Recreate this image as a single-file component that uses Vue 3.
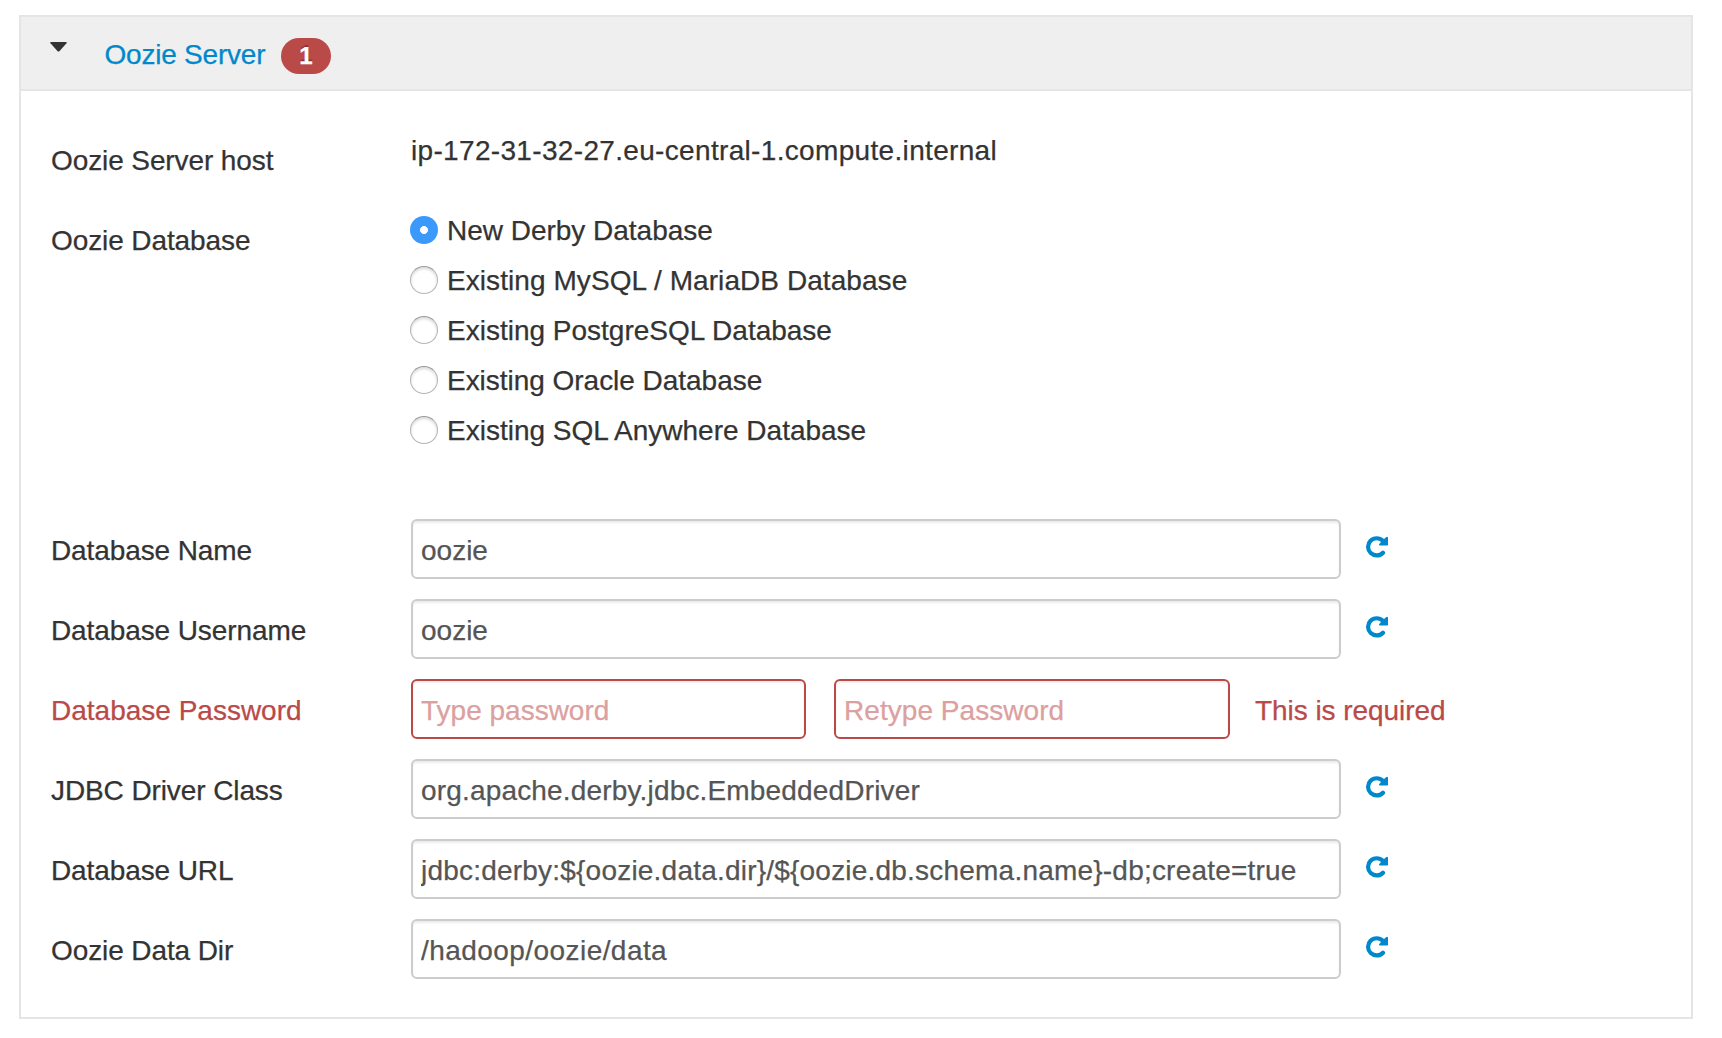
<script setup>
import { ref } from 'vue'

const database = ref('derby')
const databases = [
  { id: 'derby', text: 'New Derby Database', ls: -0.02 },
  { id: 'mysql', text: 'Existing MySQL / MariaDB Database', ls: 0.07 },
  { id: 'postgres', text: 'Existing PostgreSQL Database', ls: 0 },
  { id: 'oracle', text: 'Existing Oracle Database', ls: -0.03 },
  { id: 'sqlanywhere', text: 'Existing SQL Anywhere Database', ls: 0 },
]
const fields = ref([
  { label: 'Database Name', value: 'oozie', ls: 0 },
  { label: 'Database Username', value: 'oozie', ls: 0 },
  { label: 'Database Password', password: true },
  { label: 'JDBC Driver Class', value: 'org.apache.derby.jdbc.EmbeddedDriver', ls: 0.17 },
  { label: 'Database URL', value: 'jdbc:derby:${oozie.data.dir}/${oozie.db.schema.name}-db;create=true', ls: 0.21 },
  { label: 'Oozie Data Dir', value: '/hadoop/oozie/data', ls: 0.44 },
])
</script>

<template>
  <section class="panel">
    <header class="heading">
      <svg class="caret" width="17" height="10" viewBox="0 0 17 10"><path d="M1 0H16Q17.2 .3 16.5 1.2L9.4 9.2Q8.500 10 7.600 9.2L.5 1.2Q-.2 .3 1 0Z" /></svg>
      <a class="title">Oozie Server</a>
      <span class="badge">1</span>
    </header>

    <div class="body">
      <div class="row host">
        <div class="label">Oozie Server host</div>
        <div class="value">ip-172-31-32-27.eu-central-1.compute.internal</div>
      </div>

      <div class="row database">
        <div class="label">Oozie Database</div>
        <div class="options">
          <label v-for="d in databases" :key="d.id" class="option">
            <input v-model="database" type="radio" class="radio" :value="d.id" />
            <span :style="{ letterSpacing: d.ls + 'px' }">{{ d.text }}</span>
          </label>
        </div>
      </div>

      <div v-for="f in fields" :key="f.label" class="row field" :class="{ error: f.password }">
        <div class="label">{{ f.label }}</div>
        <template v-if="f.password">
          <input class="text half" placeholder="Type password" />
          <input class="text half second" placeholder="Retype Password" />
          <span class="message">This is required</span>
        </template>
        <template v-else>
          <input v-model="f.value" class="text" :style="{ letterSpacing: f.ls + 'px' }" />
          <svg class="undo" width="22" height="22" viewBox="0 0 22 22">
            <path d="M17 16.700A8.600 8.600 0 1 1 16.800 4.800" fill="none" stroke="#08c" stroke-width="4.200" stroke-linecap="round" />
            <path d="M22 1.600V8.800Q22 9.600 21.200 9.600H13.800Q12.500 9.200 13.300 8L15 6L17.500 3.500L20.400 1Q21.800 .4 22 1.600Z" fill="#08c" />
          </svg>
        </template>
      </div>
    </div>
  </section>
</template>

<style>
body {
  background: #fff;
}
</style>

<style scoped>
.panel {
  box-sizing: border-box;
  width: 1674px;
  height: 1004px;
  margin: 15px 0 0 19px;
  border: 2px solid #e5e5e5;
  color: #333;
  font: 28px/40px "Liberation Sans", Arial, sans-serif;
  -webkit-text-stroke: 0.25px currentColor;
}
.heading {
  display: flex;
  align-items: flex-start;
  height: 72px;
  background: #efefef;
  border-bottom: 2px solid #e5e5e5;
}
.caret {
  margin: 25px 0 0 29px;
  fill: #333;
}
.title {
  width: 176.500px;
  margin: 18px 0 0 37.500px;
  color: #08c;
  letter-spacing: -0.22px;
}
.badge {
  width: 50px;
  height: 36px;
  margin-top: 21px;
  border-radius: 18px;
  background: #b94a48;
  color: #fff;
  font-size: 24px;
  font-weight: bold;
  line-height: 35px;
  text-align: center;
  text-shadow: 0 -2px 0 rgba(0, 0, 0, 0.25);
}
.body {
  padding: 39px 0 0 30px;
}
.row {
  display: flex;
  align-items: flex-start;
  height: 80px;
}
.row.database {
  height: 309px;
}
.label {
  flex: none;
  width: 360px;
  padding-top: 11px;
  letter-spacing: -0.1px;
}
.value {
  padding-top: 1px;
  letter-spacing: 0.33px;
}
.options {
  display: flex;
  flex-direction: column;
  gap: 10px;
  margin-left: -1px;
}
.option {
  display: flex;
  height: 40px;
}
.option span {
  padding-top: 1px;
}
.radio {
  appearance: none;
  box-sizing: border-box;
  width: 28px;
  height: 28px;
  margin: 6px 9px 0 0;
  border: 1px solid #b4b4b4;
  border-top-color: #999;
  border-radius: 50%;
  background: #fff;
  box-shadow: inset 0 2px 3px rgba(0, 0, 0, 0.14);
}
.radio:checked {
  border: none;
  background: radial-gradient(circle at 14px 14px, #fff 3.6px, #3b99fc 4.3px);
  box-shadow: none;
}
.text {
  box-sizing: border-box;
  width: 930px;
  height: 60px;
  margin: 0;
  padding: 4px 8px 0;
  border: 2px solid #ccc;
  border-radius: 6px;
  background: #fff;
  box-shadow: inset 0 2px 2px rgba(0, 0, 0, 0.075);
  color: #555;
  font: inherit;
  outline: none;
}
.field .label {
  padding-top: 12px;
}
.half {
  width: 395px;
}
.second {
  width: 396px;
  margin-left: 28px;
}
.error {
  color: #b94a48;
}
.error .text {
  border-color: #b94a48;
}
.error .label {
  letter-spacing: 0;
}
.error .text::placeholder {
  color: #dca0a0;
  opacity: 1;
}
.second::placeholder {
  letter-spacing: 0.05px;
}
.message {
  margin: 12px 0 0 25px;
  letter-spacing: -0.05px;
}
.undo {
  margin: 17px 0 0 25px;
}
</style>
